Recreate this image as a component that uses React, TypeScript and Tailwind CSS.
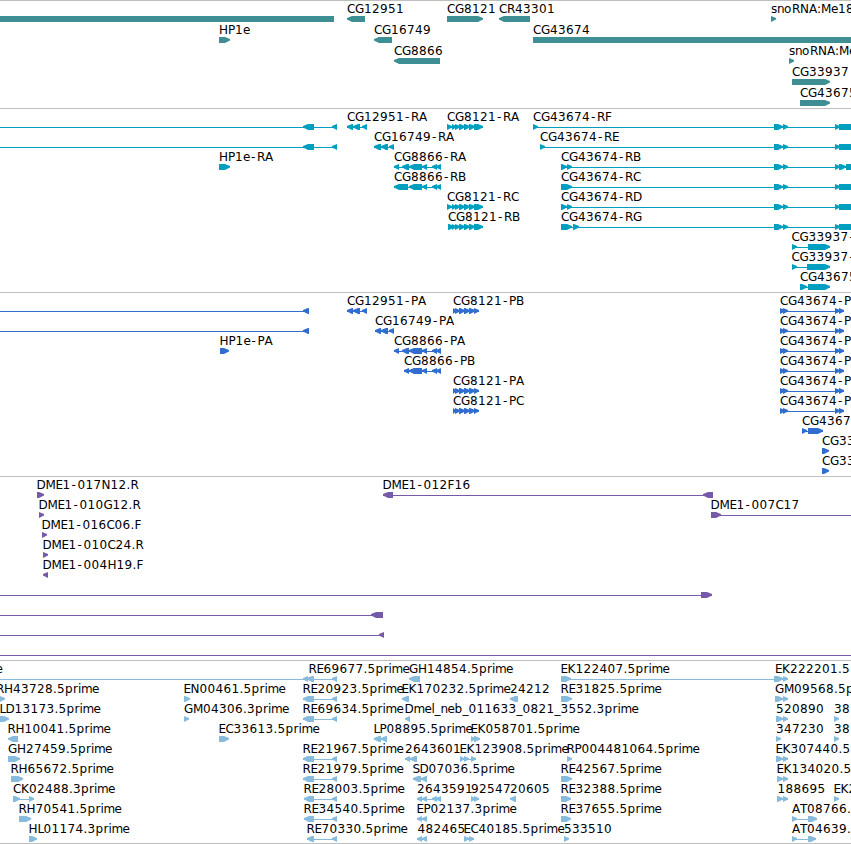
type Dir = 'L' | 'R';
type Block = [start: number, end: number];

interface Feature {
  row: number;
  x: number;
  name?: string;
  dir: Dir;
  blocks: Block[];
  // connector line, when it runs past the blocks
  line?: Block;
}

interface TrackData {
  id: string;
  color: string;
  rowHeight: number;
  height: number;
  features: Feature[];
}

const VIEW_WIDTH = 851;
const OFF_LEFT = -20;
const OFF_RIGHT = 880;

// whole-pixel advances, digits and anything unlisted are 8 wide
const ADVANCE: Record<string, number> = {
  G: 9, D: 9, H: 9, N: 9, M: 10, E: 7, F: 7, P: 7, L: 6, S: 7, T: 7,
  e: 7, r: 5, i: 3, l: 3, m: 11, s: 6, n: 7, '.': 4, ':': 4, '-': 7, _: 6,
};

function glyphPositions(text: string, x: number) {
  let pos = x;
  return [...text].map((ch) => {
    // the hyphen is narrower than its cell, so nudge it towards the middle
    const current = ch === '-' ? pos + 1 : pos;
    pos += ADVANCE[ch] ?? 8;
    return current;
  });
}

function feature(row: number, x: number, name: string, dir: Dir, blocks: Block[], line?: Block): Feature {
  return { row, x, name, dir, blocks, line };
}

const genes: Feature[] = [
  feature(0, OFF_LEFT, '', 'L', [[OFF_LEFT, 334]]),
  feature(0, 347, 'CG12951', 'L', [[347, 365]]),
  feature(0, 447, 'CG8121', 'R', [[447, 483]]),
  feature(0, 499, 'CR43301', 'L', [[499, 530]]),
  feature(0, 771, 'snoRNA:Me18', 'R', [[771, 776]]),
  feature(1, 219, 'HP1e', 'R', [[219, 230]]),
  feature(1, 374, 'CG16749', 'L', [[374, 392]]),
  feature(1, 533, 'CG43674', 'R', [[533, OFF_RIGHT]]),
  feature(2, 394, 'CG8866', 'L', [[394, 440]]),
  feature(2, 789, 'snoRNA:Me', 'R', [[789, 794]]),
  feature(3, 792, 'CG33937', 'R', [[792, 830]]),
  feature(4, 800, 'CG43675', 'R', [[800, 830]]),
];

const rightExons: Block[] = [[774, 783], [783, 788], [835, 840], [839, OFF_RIGHT]];
const rightExonsSplit: Block[] = [[774, 783], [783, 788], [835, 840], [839, 846], [846, OFF_RIGHT]];
const cg8121Exons: Block[] = [[452, 456], [455, 460], [459, 465], [464, 470], [469, 475], [474, 483]];

const transcripts: Feature[] = [
  feature(0, OFF_LEFT, '', 'L', [[303, 314], [332, 337]], [OFF_LEFT, 337]),
  feature(1, OFF_LEFT, '', 'L', [[303, 314], [332, 337]], [OFF_LEFT, 337]),
  feature(0, 347, 'CG12951-RA', 'L', [[347, 353], [353, 360], [362, 367]]),
  feature(0, 447, 'CG8121-RA', 'R', [[447, 452], ...cg8121Exons]),
  feature(0, 533, 'CG43674-RF', 'R', [[533, 538], ...rightExons]),
  feature(1, 374, 'CG16749-RA', 'L', [[374, 381], [381, 388], [389, 394]]),
  feature(1, 540, 'CG43674-RE', 'R', [[540, 545], ...rightExons]),
  feature(2, 219, 'HP1e-RA', 'R', [[219, 230]]),
  feature(2, 394, 'CG8866-RA', 'L', [[394, 399], [402, 409], [409, 422], [422, 427], [432, 437], [436, 441]]),
  feature(2, 561, 'CG43674-RB', 'R', [[561, 567], [567, 572], ...rightExonsSplit]),
  feature(3, 394, 'CG8866-RB', 'L', [[394, 408], [409, 422], [422, 427], [432, 437], [436, 441]]),
  feature(3, 561, 'CG43674-RC', 'R', [[561, 572], ...rightExons]),
  feature(4, 447, 'CG8121-RC', 'R', [[447, 452], ...cg8121Exons]),
  feature(4, 561, 'CG43674-RD', 'R', [[561, 567], [567, 572], ...rightExons]),
  feature(5, 448, 'CG8121-RB', 'R', [[448, 454], ...cg8121Exons]),
  feature(5, 561, 'CG43674-RG', 'R', [[561, 572], [573, 579], ...rightExons]),
  feature(6, 791.5, 'CG33937-', 'R', [[792, 797], [808, 830]]),
  feature(7, 791.5, 'CG33937-', 'R', [[792, 797], [807, 830]]),
  feature(8, 800, 'CG43675', 'R', [[800, 807], [808, 830]]),
];

const cdsExons: Block[] = [[453, 456], [455, 460], [459, 465], [464, 470], [469, 475], [474, 479]];

const proteins: Feature[] = [
  feature(0, OFF_LEFT, '', 'L', [[303, 309]], [OFF_LEFT, 309]),
  feature(1, OFF_LEFT, '', 'L', [[303, 309]], [OFF_LEFT, 309]),
  feature(0, 347, 'CG12951-PA', 'L', [[347, 353], [353, 360], [362, 367]]),
  feature(0, 453, 'CG8121-PB', 'R', cdsExons),
  feature(1, 375, 'CG16749-PA', 'L', [[375, 381], [381, 388], [389, 394]]),
  feature(2, 219.5, 'HP1e-PA', 'R', [[220, 229]]),
  feature(2, 394, 'CG8866-PA', 'L', [[394, 399], [402, 409], [409, 422], [422, 427], [432, 437], [436, 441]]),
  feature(3, 404, 'CG8866-PB', 'L', [[404, 409], [409, 422], [422, 427], [432, 437], [436, 441]]),
  feature(4, 453, 'CG8121-PA', 'R', cdsExons),
  feature(5, 453, 'CG8121-PC', 'R', cdsExons),
  ...[0, 1, 2, 3, 4, 5].map((row) =>
    feature(row, 780, 'CG43674-P', 'R', [[780, 785], [783, 788], [835, 840], [839, 844]]),
  ),
  feature(6, 802, 'CG4367', 'R', [[802, 807], [808, 823]]),
  feature(7, 822, 'CG33', 'R', [[822, 829]]),
  feature(8, 822, 'CG33', 'R', [[822, 829]]),
];

const clones: Feature[] = [
  feature(0, 36.5, 'DME1-017N12.R', 'R', [[37, 44]]),
  feature(0, 382.5, 'DME1-012F16', 'L', [[383, 393], [703, 713]]),
  feature(1, 38.5, 'DME1-010G12.R', 'R', [[39, 44]]),
  feature(1, 710.5, 'DME1-007C17', 'R', [[711, 721]], [711, OFF_RIGHT]),
  feature(2, 41.5, 'DME1-016C06.F', 'R', [[42, 47]]),
  feature(3, 42.5, 'DME1-010C24.R', 'R', [[43, 48]]),
  feature(4, 42.5, 'DME1-004H19.F', 'L', [[43, 48]]),
  feature(5, OFF_LEFT, '', 'R', [[701, 712]], [OFF_LEFT, 712]),
  feature(6, OFF_LEFT, '', 'L', [[371, 383]], [OFF_LEFT, 383]),
  feature(7, OFF_LEFT, '', 'L', [[379, 384]], [OFF_LEFT, 384]),
  feature(8, OFF_LEFT, '', 'L', [], [OFF_LEFT, OFF_RIGHT]),
];

const pair: Block[] = [[303, 314], [332, 337]];

const ests: Feature[] = [
  feature(0, -4.5, 'e', 'L', []),
  feature(0, 308.5, 'RE69677.5prime', 'L', [[303, 308], [307, 314], [332, 337]], [OFF_LEFT, 337]),
  feature(0, 409, 'GH14854.5prime', 'L', [[409, 420]]),
  feature(0, 560.5, 'EK122407.5prime', 'R', [[561, 571]], [561, 788]),
  feature(0, 775, 'EK222201.5', 'R', [[774, 783], [783, 788]]),
  feature(1, -4, 'RH43728.5prime', 'R', [[-6, 5]]),
  feature(1, 183.5, 'EN00461.5prime', 'R', [[184, 190]]),
  feature(1, 302.5, 'RE20923.5prime', 'L', pair),
  feature(1, 401.5, 'EK170232.5prime', 'L', [[402, 409]]),
  feature(1, 510, '24212', 'L', [[510, 518]]),
  feature(1, 560.5, 'RE31825.5prime', 'R', [[561, 572]]),
  feature(1, 775, 'GM09568.5p', 'R', [[775, 783], [783, 788]]),
  feature(2, -0.5, 'LD13173.5prime', 'R', [[-5, 9]]),
  feature(2, 184, 'GM04306.3prime', 'R', [[184, 189]]),
  feature(2, 302.5, 'RE69634.5prime', 'L', pair),
  feature(2, 404.5, 'Dmel_neb_011633_0821_3552.3prime', 'L', [[405, 410]]),
  feature(2, 776, '520890', 'R', [[776, 783], [783, 788]]),
  feature(2, 834, '38', 'R', [[834, 839]]),
  feature(3, 7.5, 'RH10041.5prime', 'L', [[8, 18]]),
  feature(3, 218.5, 'EC33613.5prime', 'R', [[219, 229]]),
  feature(3, 373.5, 'LP08895.5prime', 'L', [[374, 381], [381, 387]]),
  feature(3, 470.5, 'EK058701.5prime', 'R', [[471, 475], [474, 480]]),
  feature(3, 776, '347230', 'R', [[776, 781]]),
  feature(3, 834, '38', 'R', [[834, 839]]),
  feature(4, 8, 'GH27459.5prime', 'R', [[8, 20]]),
  feature(4, 302.5, 'RE21967.5prime', 'L', pair),
  feature(4, 405, '2643601', 'L', [[405, 410], [410, 417]]),
  feature(4, 459.5, 'EK123908.5prime', 'R', [[460, 464], [464, 469], [471, 476]]),
  feature(4, 566.5, 'RP004481064.5prime', 'R', [[567, 572]]),
  feature(4, 775.5, 'EK307440.5', 'R', [[776, 783], [783, 788]]),
  feature(5, 10.5, 'RH65672.5prime', 'R', [[11, 23]]),
  feature(5, 302.5, 'RE21979.5prime', 'L', pair),
  feature(5, 412.5, 'SD07036.5prime', 'L', [[413, 421], [421, 427]]),
  feature(5, 560.5, 'RE42567.5prime', 'R', [[561, 572]]),
  feature(5, 776.5, 'EK134020.5', 'R', [[777, 783], [783, 788]]),
  feature(6, 13, 'CK02488.3prime', 'R', [[13, 20], [29, 34]]),
  feature(6, 303.5, 'RE28003.5prime', 'L', [[304, 314], [332, 337]]),
  feature(6, 417, '2643591', 'L', [[417, 422], [422, 427], [432, 437], [436, 441]]),
  feature(6, 471, '92547', 'R', [[471, 475], [474, 479]]),
  feature(6, 510, '20605', 'L', [[510, 516]]),
  feature(6, 560.5, 'RE32388.5prime', 'R', [[561, 571]]),
  feature(6, 777.5, '188695', 'R', [[777, 783], [783, 788]]),
  feature(6, 833.5, 'EK2', 'R', [[834, 839]]),
  feature(7, 18.5, 'RH70541.5prime', 'R', [[19, 31]]),
  feature(7, 303.5, 'RE34540.5prime', 'L', [[304, 314], [332, 337]]),
  feature(7, 416.5, 'EP02137.3prime', 'L', [[417, 422], [422, 427]]),
  feature(7, 560.5, 'RE37655.5prime', 'R', [[561, 571]]),
  feature(7, 792, 'AT08766.', 'R', [[792, 797], [808, 817]]),
  feature(8, 28.5, 'HL01174.3prime', 'R', [[29, 37]]),
  feature(8, 306.5, 'RE70330.5prime', 'L', [[307, 314], [332, 337]]),
  feature(8, 417.5, '482465', 'L', [[417, 422], [422, 427]]),
  feature(8, 463.5, 'EC40185.5prime', 'R', [[464, 469], [469, 474]]),
  feature(8, 564, '533510', 'R', [[564, 569]]),
  feature(8, 792, 'AT04639.', 'R', [[792, 797], [808, 816]]),
];

const tracks: TrackData[] = [
  { id: 'genes', color: '#3d8f94', rowHeight: 21, height: 107, features: genes },
  { id: 'transcripts', color: '#009fbf', rowHeight: 20, height: 183, features: transcripts },
  { id: 'proteins', color: '#306dce', rowHeight: 20, height: 183, features: proteins },
  { id: 'clones', color: '#7759a9', rowHeight: 20, height: 183, features: clones },
  { id: 'ests', color: '#86bbdd', rowHeight: 20, height: 182, features: ests },
];

function arrowPoints([start, end]: Block, y: number, dir: Dir) {
  const tip = Math.min(5, end - start);
  if (dir === 'R') {
    return `${start},${y} ${end - tip},${y} ${end},${y + 2} ${end},${y + 3.5} ${end - tip},${y + 6} ${start},${y + 6}`;
  }
  return `${end},${y} ${start + tip},${y} ${start},${y + 2} ${start},${y + 3.5} ${start + tip},${y + 6} ${end},${y + 6}`;
}

function FeatureGlyph({ data, rowHeight, color }: { data: Feature; rowHeight: number; color: string }) {
  const { row, x, name, dir, blocks } = data;
  const top = row * rowHeight;
  const line = data.line ?? (blocks.length > 1 ? [blocks[0][0], blocks[blocks.length - 1][1]] : null);

  return (
    <g>
      {line && <rect x={line[0]} y={top + 18} width={line[1] - line[0]} height={1} fill={color} />}
      {blocks.map((block) => (
        <polygon key={block[0]} points={arrowPoints(block, top + 15, dir)} fill={color} />
      ))}
      {name && (
        <text x={glyphPositions(name, x).join(' ')} y={top + 12} fill="#000">
          {name}
        </text>
      )}
    </g>
  );
}

function Track({ track }: { track: TrackData }) {
  return (
    <section className="border-t border-[#bfbfbf]">
      <svg
        className="block overflow-hidden font-['DejaVu_Sans',sans-serif] text-[12px]"
        width={VIEW_WIDTH}
        height={track.height}
      >
        {track.features.map((f, i) => (
          <FeatureGlyph key={i} data={f} rowHeight={track.rowHeight} color={track.color} />
        ))}
      </svg>
    </section>
  );
}

export default function App() {
  return (
    <main className="flex h-[844px] w-[851px] flex-col overflow-hidden border-b border-[#bfbfbf] bg-white">
      {tracks.map((track) => (
        <Track key={track.id} track={track} />
      ))}
    </main>
  );
}
